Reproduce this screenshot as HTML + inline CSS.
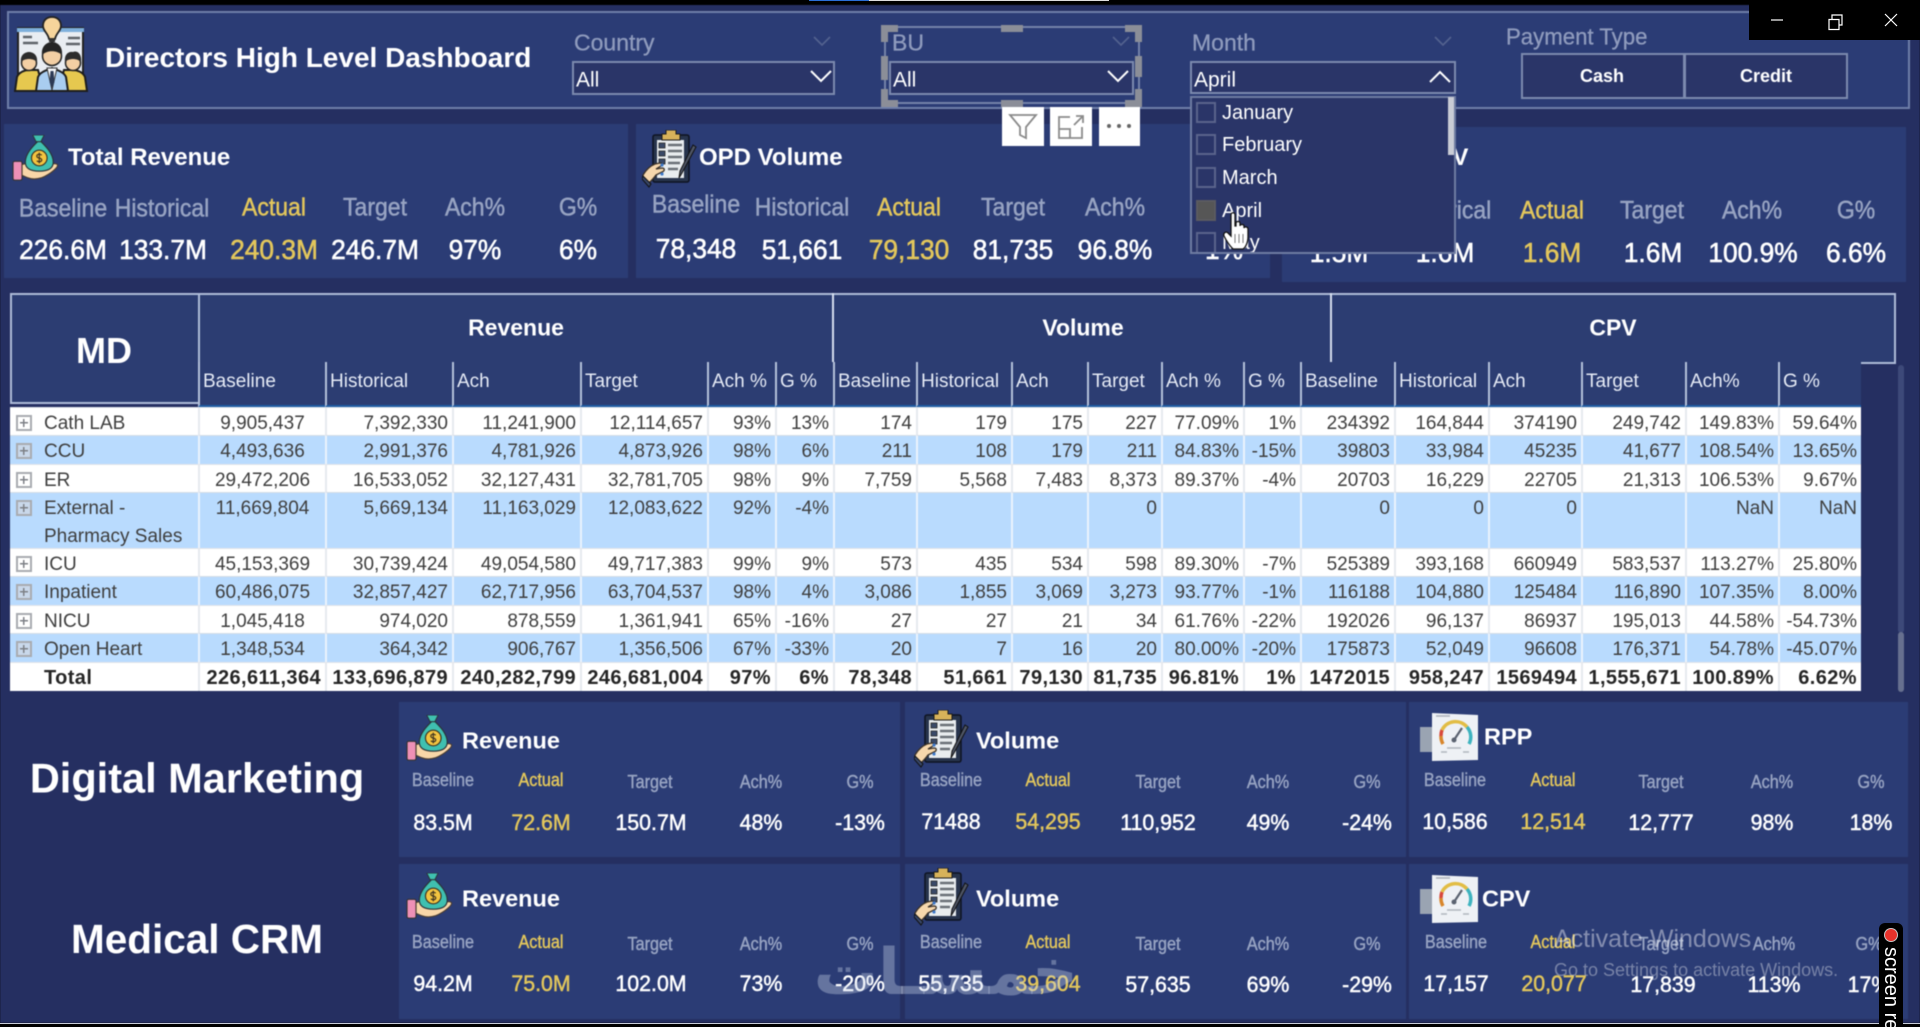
<!DOCTYPE html>
<html lang="en"><head><meta charset="utf-8"><title>Directors High Level Dashboard</title>
<style>
*{box-sizing:border-box}
html,body{margin:0;padding:0;background:#000;width:1920px;height:1027px;overflow:hidden}
body{font-family:"Liberation Sans",Arial,sans-serif;position:relative}
#p{position:absolute;left:0;top:5px;width:1920px;height:1018px;background:#252f61;overflow:hidden;filter:blur(.55px)}
#w{position:absolute;left:0;top:-5px;width:1920px;height:1027px}
.a{position:absolute}
.card{position:absolute;background:#2b3c75}
.t{position:absolute;white-space:nowrap;transform:translate(-50%,-50%);line-height:1}
.L{font-size:25px;color:#97a3c2;transform:translate(-50%,-50%) scaleX(.92);-webkit-text-stroke:.5px #97a3c2}
.V{font-size:28px;color:#fff;transform:translate(-50%,-50%) scaleX(.94);-webkit-text-stroke:.6px #fff}
.l{font-size:18px;color:#97a3c2;transform:translate(-50%,-50%) scaleX(.9);-webkit-text-stroke:.45px #97a3c2}
.v{font-size:22px;color:#fff;transform:translate(-50%,-50%) scaleX(.97);-webkit-text-stroke:.5px #fff}
.g{color:#e2c65c;-webkit-text-stroke-color:#e2c65c}
.h{position:absolute;white-space:nowrap;color:#fff;font-weight:700;line-height:1;transform:translateY(-50%)}
.sl{position:absolute;background:#2a3568;border:2px solid #7c8aae}
.c{position:absolute;white-space:nowrap;color:#fff;font-size:21px;line-height:1;transform:translateY(-50%)}
.d{font-size:20px}
.s{position:absolute;font-size:23px;color:#8f9bbd;white-space:nowrap;line-height:1;transform:translateY(-50%);-webkit-text-stroke:.3px #8f9bbd}
.hd{position:absolute;background:#8b8e98}
.tb{position:absolute;background:#fff}
.ck{position:absolute;left:1196px;width:20px;height:21px;border:2px solid #5a648c}
table{position:absolute;left:10px;top:362px;border-collapse:separate;border-spacing:0;table-layout:fixed;width:1851px;font-size:19px;color:#3e3e3e}
th{background:#2c3d72;color:#e6ebf6;font-weight:400;text-align:left;height:45px;padding:0 0 4px 3px;border-left:2px solid #b4c1da;border-bottom:2px solid #1f5da3;white-space:nowrap;overflow:hidden}
th:first-child{background:none;border:none}
td{background:#fff;height:28px;padding:4px 4px 0 0;line-height:23px;text-align:right;vertical-align:top;border-left:2px solid #e6e9ee;border-top:1px solid #e2e5ea;white-space:nowrap;overflow:hidden}
tr.b td{background:#b9dbfe;border-left-color:#eaf3fd;border-top-color:#d6dce6}
td.n{text-align:left;padding-left:34px;border-left:none;position:relative;overflow:visible}
td.m{text-align:center;padding-right:0}
tr.z td{font-weight:700;color:#252525;font-size:20px;letter-spacing:.4px;height:29px}
.pl{position:absolute;left:6px;top:7px;width:16px;height:16px;border:2px solid #a8abb0;background:linear-gradient(#7d8086,#7d8086) center/8px 1.5px no-repeat,linear-gradient(#7d8086,#7d8086) center/1.5px 8px no-repeat}
tr.b .pl{background-color:#c9d8ea}
</style></head><body>
<svg width="0" height="0" style="position:absolute">
<symbol id="bag" viewBox="0 0 58 56">
<rect x="1" y="32" width="11" height="23" rx="2" fill="#ee90b6" stroke="#333" stroke-width="1.4"/>
<path d="M12 36c8-3 13 0 17 3l13-2c6-2 11-3 13-1 2 3-9 12-19 16-10 3-16 1-24-3z" fill="#f8d6a8" stroke="#4a3d32" stroke-width="1.4"/>
<path d="M31 8c-4 4-15 14-15 25 0 8 7 11 17 11s17-3 17-11c0-11-11-21-15-25z" fill="#3fc0b0" stroke="#2b3338" stroke-width="1.4"/>
<path d="M25 0h14l-4 8h-6z" fill="#3fc0b0" stroke="#2b3338" stroke-width="1.2"/>
<circle cx="33" cy="28" r="9.5" fill="#f3c440" stroke="#3a3020" stroke-width="1.4"/>
<path d="M36 24.500c-2-1.500-6-1.500-6 1.300 0 3 6 1.500 6 4.500 0 2.700-4 2.700-6 1.200M33 21.500v13" fill="none" stroke="#3a3020" stroke-width="1.4"/>
</symbol>
<symbol id="clip" viewBox="0 0 56 58">
<rect x="11" y="5" width="36" height="47" rx="2" fill="#27344d" stroke="#0e1320" stroke-width="1.500"/>
<rect x="15" y="10" width="27" height="38" fill="#e9edef"/>
<path d="M24 0h10v4h4v6H20V4h4z" fill="#d7b25a" stroke="#1a1a1a"/>
<path d="M26 15h14M26 21h14M26 27h14M26 33h12M26 39h10" stroke="#6b7177" stroke-width="2.600"/>
<path d="M17 13h6v5h-6zM17 21h6v5h-6zM17 29h6v5h-6z" fill="#3a4a68" stroke="#222" stroke-width=".8"/>
<path d="M54 17 40 43l-3 5 1-7 13-26z" fill="#4f5666" stroke="#101010"/>
<path d="M1 45c3-5 7-9 12-11l5-1c2 0 3 2 1 3l-5 3 6-1c3 0 3 3 0 4l-6 3c-2 3-5 6-8 9l-5-5z" fill="#f6d7ac" stroke="#3a3128" stroke-width="1.300"/>
<path d="M1 46l8 8-2 3-7-8z" fill="#38476a" stroke="#111"/>
<circle cx="20" cy="35" r="1.600" fill="#3d78c8"/><circle cx="20" cy="44" r="1.600" fill="#3d78c8"/>
</symbol>
<symbol id="gau" viewBox="0 0 60 48">
<rect x="1" y="14" width="14" height="25" fill="#9aa4b2"/>
<path d="M13 0l46 2v45l-46 1z" fill="#eef1f5"/>
<path d="M17 3h14" stroke="#aab0b8" stroke-width="1.500"/>
<path d="M24 31a15 15 0 0 1-2-8" fill="none" stroke="#d8862c" stroke-width="3.500"/>
<path d="M22 23a15 15 0 0 1 1-6" fill="none" stroke="#d8483a" stroke-width="3.500"/>
<path d="M23 17a15 15 0 0 1 25-3" fill="none" stroke="#e2bd45" stroke-width="3.500"/>
<path d="M48 14a15 15 0 0 1 2 17" fill="none" stroke="#3eb3bf" stroke-width="3.500"/>
<path d="M35 27l8-12" stroke="#5a6270" stroke-width="2.200"/><circle cx="35" cy="27" r="2.500" fill="#5a6270"/>
<path d="M28 35h14M22 39h6M44 39h6" stroke="#b0b6be" stroke-width="1.600"/>
</symbol>
</svg>
<div id="p"><div id="w">
<!-- header -->
<div class="a" style="left:7px;top:11px;width:1903px;height:98px;background:#2b3c75;border:2px solid #6f7fa9"></div>
<svg class="a" style="left:14px;top:13px" width="76" height="80" viewBox="0 0 76 80">
<rect x="4" y="15" width="65" height="52" fill="#e9edf2" stroke="#222" stroke-width="2"/>
<rect x="3" y="15" width="67" height="4" fill="#7eb0dc"/>
<path d="M38 4c6 0 9 4 9 9 0 5-5 7-6 13h-6c-1-6-6-8-6-13 0-5 3-9 9-9z" fill="#f6d49b" stroke="#222" stroke-width="1.800"/>
<rect x="35" y="26" width="6" height="3" fill="#333"/>
<path d="M9 24h9M9 30h15M54 25h12M52 31h14" stroke="#5f646a" stroke-width="2.500"/>
<path d="M1 78l2-14c2-5 8-7 12-7h9l6 21z" fill="#e6c84f" stroke="#1d1d1d" stroke-width="2"/>
<path d="M73 78l-2-14c-2-5-8-7-12-7h-9l-6 21z" fill="#e6c84f" stroke="#1d1d1d" stroke-width="2"/>
<circle cx="15" cy="50" r="7.500" fill="#f3cfa4" stroke="#222" stroke-width="1.500"/><path d="M7 49c-1-7 4-10 8-10s9 3 8 10c-4-4-12-4-16 0z" fill="#2c2c2c"/>
<circle cx="59" cy="50" r="7.500" fill="#f3cfa4" stroke="#222" stroke-width="1.500"/><path d="M51 49c-1-7 3-11 8-10 5-2 9 3 8 10-4-4-12-4-16 0z" fill="#2c2c2c"/>
<path d="M22 78l2-14c2-5 9-7 14-9 5 2 12 4 14 9l2 14z" fill="#a9cdf0" stroke="#1d1d1d" stroke-width="2"/>
<path d="M33 55l5 22 5-22z" fill="#f5f7fa" stroke="#333"/><path d="M36.500 58h3l1 11-2.500 6-2.500-6z" fill="#2c3a55"/>
<circle cx="38" cy="43" r="9.500" fill="#f3cfa4" stroke="#222" stroke-width="1.500"/><path d="M28 42c-1-9 5-13 10-13s11 4 10 13c-5-5-15-5-20 0z" fill="#252525"/>
</svg>
<div class="h" style="left:105px;top:58px;font-size:28px">Directors High Level Dashboard</div>

<!-- KPI cards -->
<div class="card" style="left:4px;top:124px;width:624px;height:154px"></div>
<svg class="a" style="left:12px;top:135px" width="48" height="46"><use href="#bag"/></svg>
<div class="h" style="left:68px;top:158px;font-size:24px">Total Revenue</div>
<span class="t L" style="left:63px;top:209px">Baseline</span><span class="t L" style="left:162px;top:209px">Historical</span><span class="t L g" style="left:274px;top:208px">Actual</span><span class="t L" style="left:375px;top:208px">Target</span><span class="t L" style="left:475px;top:208px">Ach%</span><span class="t L" style="left:578px;top:208px">G%</span>
<span class="t V" style="left:63px;top:250px">226.6M</span><span class="t V" style="left:163px;top:250px">133.7M</span><span class="t V g" style="left:274px;top:250px">240.3M</span><span class="t V" style="left:375px;top:250px">246.7M</span><span class="t V" style="left:475px;top:250px">97%</span><span class="t V" style="left:578px;top:250px">6%</span>

<div class="card" style="left:636px;top:124px;width:634px;height:154px"></div>
<svg class="a" style="left:642px;top:130px" width="56" height="58"><use href="#clip"/></svg>
<div class="h" style="left:699px;top:158px;font-size:24px">OPD Volume</div>
<span class="t L" style="left:696px;top:205px">Baseline</span><span class="t L" style="left:802px;top:208px">Historical</span><span class="t L g" style="left:909px;top:208px">Actual</span><span class="t L" style="left:1013px;top:208px">Target</span><span class="t L" style="left:1115px;top:208px">Ach%</span><span class="t L" style="left:1224px;top:208px">G%</span>
<span class="t V" style="left:696px;top:249px">78,348</span><span class="t V" style="left:802px;top:250px">51,661</span><span class="t V g" style="left:909px;top:250px">79,130</span><span class="t V" style="left:1013px;top:250px">81,735</span><span class="t V" style="left:1115px;top:250px">96.8%</span><span class="t V" style="left:1224px;top:250px">1%</span>

<div class="card" style="left:1282px;top:127px;width:624px;height:155px"></div>
<div class="h" style="left:1419px;top:158px;font-size:24px">CPV</div>
<span class="t L" style="left:1339px;top:211px">Baseline</span><span class="t L" style="left:1444px;top:211px">Historical</span><span class="t L g" style="left:1552px;top:211px">Actual</span><span class="t L" style="left:1652px;top:211px">Target</span><span class="t L" style="left:1752px;top:211px">Ach%</span><span class="t L" style="left:1856px;top:211px">G%</span>
<span class="t V" style="left:1339px;top:253px">1.5M</span><span class="t V" style="left:1445px;top:253px">1.6M</span><span class="t V g" style="left:1552px;top:253px">1.6M</span><span class="t V" style="left:1653px;top:253px">1.6M</span><span class="t V" style="left:1753px;top:253px">100.9%</span><span class="t V" style="left:1856px;top:253px">6.6%</span>

<!-- slicers -->
<div class="s" style="left:574px;top:43px">Country</div>
<svg class="a" style="left:813px;top:36px" width="18" height="10"><path d="M1 1l8 8 8-8" fill="none" stroke="#54628f" stroke-width="1.600"/></svg>
<div class="sl" style="left:572px;top:61px;width:263px;height:34px"></div>
<div class="c" style="left:576px;top:80px">All</div>
<svg class="a" style="left:810px;top:70px" width="22" height="13"><path d="M1 1l10 10L21 1" fill="none" stroke="#fff" stroke-width="2"/></svg>

<div class="a" style="left:884px;top:26px;width:256px;height:78px;border:2px solid #7482a8"></div>
<div class="s" style="left:892px;top:43px">BU</div>
<svg class="a" style="left:1112px;top:36px" width="18" height="10"><path d="M1 1l8 8 8-8" fill="none" stroke="#54628f" stroke-width="1.600"/></svg>
<div class="sl" style="left:889px;top:61px;width:245px;height:34px"></div>
<div class="c" style="left:893px;top:80px">All</div>
<svg class="a" style="left:1107px;top:70px" width="22" height="13"><path d="M1 1l10 10L21 1" fill="none" stroke="#fff" stroke-width="2"/></svg>
<i class="hd" style="left:881px;top:25px;width:17px;height:7px"></i><i class="hd" style="left:881px;top:25px;width:7px;height:17px"></i>
<i class="hd" style="left:1125px;top:25px;width:17px;height:7px"></i><i class="hd" style="left:1135px;top:25px;width:7px;height:17px"></i>
<i class="hd" style="left:881px;top:100px;width:17px;height:7px"></i><i class="hd" style="left:881px;top:89px;width:7px;height:18px"></i>
<i class="hd" style="left:1125px;top:100px;width:17px;height:7px"></i><i class="hd" style="left:1135px;top:89px;width:7px;height:18px"></i>
<i class="hd" style="left:1001px;top:25px;width:22px;height:7px"></i><i class="hd" style="left:1001px;top:100px;width:22px;height:7px"></i>
<i class="hd" style="left:881px;top:56px;width:7px;height:24px"></i><i class="hd" style="left:1135px;top:56px;width:7px;height:21px"></i>

<div class="tb" style="left:1002px;top:107px;width:42px;height:39px"></div>
<svg class="a" style="left:1008px;top:113px" width="30" height="28"><path d="M2 2h26L18 14v11l-6-3v-8z" fill="none" stroke="#8a8a8a" stroke-width="1.800"/></svg>
<div class="tb" style="left:1050px;top:107px;width:42px;height:39px"></div>
<svg class="a" style="left:1057px;top:114px" width="28" height="26"><path d="M13 3H2v21h23V13M2 15h11v9M17 11l8-8M19 2h7v7" fill="none" stroke="#8a8a8a" stroke-width="1.800"/></svg>
<div class="tb" style="left:1099px;top:107px;width:41px;height:39px"></div>
<svg class="a" style="left:1104px;top:122px" width="30" height="8"><circle cx="5" cy="4" r="2" fill="#666"/><circle cx="15" cy="4" r="2" fill="#666"/><circle cx="25" cy="4" r="2" fill="#666"/></svg>

<div class="s" style="left:1192px;top:43px">Month</div>
<svg class="a" style="left:1434px;top:36px" width="18" height="10"><path d="M1 1l8 8 8-8" fill="none" stroke="#54628f" stroke-width="1.600"/></svg>
<div class="sl" style="left:1190px;top:61px;width:266px;height:33px"></div>
<div class="c" style="left:1194px;top:80px">April</div>
<svg class="a" style="left:1429px;top:70px" width="22" height="13"><path d="M1 12L11 2l10 10" fill="none" stroke="#fff" stroke-width="2"/></svg>

<div class="a" style="left:1190px;top:96px;width:266px;height:158px;background:#2a3568;border:2px solid #6f7ca2;overflow:hidden"></div>
<div class="a" style="left:1448px;top:97px;width:6px;height:58px;background:#c9ccd5"></div>
<i class="ck" style="top:102px"></i><i class="ck" style="top:134px"></i><i class="ck" style="top:167px"></i><i class="ck" style="top:200px;background:#565656;border-color:#5a5a60"></i><i class="ck" style="top:232px;height:20px;border-bottom:none"></i>
<div class="c d" style="left:1222px;top:113px">January</div><div class="c d" style="left:1222px;top:145px">February</div><div class="c d" style="left:1222px;top:178px">March</div><div class="c d" style="left:1222px;top:211px">April</div>
<div class="a" style="left:1222px;top:232px;width:60px;height:20px;overflow:hidden"><span style="position:absolute;left:0;top:1px;color:#fff;font-size:20px;line-height:1.000">May</span></div>
<svg class="a" style="left:1222px;top:212px" width="32" height="38" viewBox="0 0 32 38"><path d="M9 3c0-3 4-3 4 0v11l1 0V11c0-2 4-2 4 0v3c0-2 4-2 4 0v2c1-2 4-1 4 1v8c0 6-3 11-5 12H11c-3-3-7-9-9-13-1-3 2-5 4-3l3 3z" fill="#fff" stroke="#111" stroke-width="1.300"/><path d="M13 22v9M17 22v9M21 22v9" stroke="#777"/></svg>

<div class="s" style="left:1506px;top:37px;transform:translateY(-50%) scaleX(.965);transform-origin:left">Payment Type</div>
<div class="sl" style="left:1521px;top:53px;width:164px;height:46px"></div>
<div class="sl" style="left:1684px;top:53px;width:164px;height:46px"></div>
<div class="h" style="left:1602px;top:76px;font-size:18px;transform:translate(-50%,-50%)">Cash</div>
<div class="h" style="left:1766px;top:76px;font-size:18px;transform:translate(-50%,-50%)">Credit</div>

<!-- table -->
<div class="a" style="left:10px;top:293px;width:190px;height:111px;background:#2c3d72;border:2px solid #aebcd8"></div>
<div class="h" style="left:104px;top:351px;font-size:36px;transform:translate(-50%,-50%)">MD</div>
<div class="a" style="left:198px;top:293px;width:1698px;height:71px;background:#2c3d72;border:2px solid #aebcd8"></div>
<i class="a" style="left:832px;top:293px;width:2px;height:70px;background:#d5deee"></i>
<i class="a" style="left:1330px;top:293px;width:2px;height:70px;background:#d5deee"></i>
<div class="h" style="left:516px;top:328px;font-size:23px;transform:translate(-50%,-50%)">Revenue</div>
<div class="h" style="left:1083px;top:328px;font-size:23px;transform:translate(-50%,-50%)">Volume</div>
<div class="h" style="left:1613px;top:328px;font-size:23px;transform:translate(-50%,-50%)">CPV</div>
<i class="a" style="left:1898px;top:365px;width:6px;height:268px;background:#3d4979;border-radius:3px"></i>
<i class="a" style="left:1898px;top:632px;width:6px;height:60px;background:#67708f;border-radius:3px"></i>

<table>
<colgroup><col style="width:188px"><col style="width:127px"><col style="width:127px"><col style="width:128px"><col style="width:127px"><col style="width:68px"><col style="width:58px"><col style="width:83px"><col style="width:95px"><col style="width:76px"><col style="width:74px"><col style="width:82px"><col style="width:57px"><col style="width:94px"><col style="width:94px"><col style="width:93px"><col style="width:104px"><col style="width:93px"><col style="width:83px"></colgroup>
<tr><th></th><th>Baseline</th><th>Historical</th><th>Ach</th><th>Target</th><th>Ach %</th><th>G %</th><th>Baseline</th><th>Historical</th><th>Ach</th><th>Target</th><th>Ach %</th><th>G %</th><th>Baseline</th><th>Historical</th><th>Ach</th><th>Target</th><th>Ach%</th><th>G %</th></tr>
<tr><td class="n"><i class="pl"></i>Cath LAB</td><td class="m">9,905,437</td><td>7,392,330</td><td>11,241,900</td><td>12,114,657</td><td>93%</td><td>13%</td><td>174</td><td>179</td><td>175</td><td>227</td><td>77.09%</td><td>1%</td><td>234392</td><td>164,844</td><td>374190</td><td>249,742</td><td>149.83%</td><td>59.64%</td></tr>
<tr class="b" style="height:29px"><td class="n"><i class="pl"></i>CCU</td><td class="m">4,493,636</td><td>2,991,376</td><td>4,781,926</td><td>4,873,926</td><td>98%</td><td>6%</td><td>211</td><td>108</td><td>179</td><td>211</td><td>84.83%</td><td>-15%</td><td>39803</td><td>33,984</td><td>45235</td><td>41,677</td><td>108.54%</td><td>13.65%</td></tr>
<tr><td class="n"><i class="pl"></i>ER</td><td class="m">29,472,206</td><td>16,533,052</td><td>32,127,431</td><td>32,781,705</td><td>98%</td><td>9%</td><td>7,759</td><td>5,568</td><td>7,483</td><td>8,373</td><td>89.37%</td><td>-4%</td><td>20703</td><td>16,229</td><td>22705</td><td>21,313</td><td>106.53%</td><td>9.67%</td></tr>
<tr class="b" style="height:56px"><td class="n" style="height:56px"><i class="pl"></i><div style="line-height:28px;margin-top:-2px;margin-bottom:-3px">External -<br>Pharmacy Sales</div></td><td class="m">11,669,804</td><td>5,669,134</td><td>11,163,029</td><td>12,083,622</td><td>92%</td><td>-4%</td><td></td><td></td><td></td><td>0</td><td></td><td></td><td>0</td><td>0</td><td>0</td><td></td><td>NaN</td><td>NaN</td></tr>
<tr><td class="n"><i class="pl"></i>ICU</td><td class="m">45,153,369</td><td>30,739,424</td><td>49,054,580</td><td>49,717,383</td><td>99%</td><td>9%</td><td>573</td><td>435</td><td>534</td><td>598</td><td>89.30%</td><td>-7%</td><td>525389</td><td>393,168</td><td>660949</td><td>583,537</td><td>113.27%</td><td>25.80%</td></tr>
<tr class="b" style="height:29px"><td class="n"><i class="pl"></i>Inpatient</td><td class="m">60,486,075</td><td>32,857,427</td><td>62,717,956</td><td>63,704,537</td><td>98%</td><td>4%</td><td>3,086</td><td>1,855</td><td>3,069</td><td>3,273</td><td>93.77%</td><td>-1%</td><td>116188</td><td>104,880</td><td>125484</td><td>116,890</td><td>107.35%</td><td>8.00%</td></tr>
<tr><td class="n"><i class="pl"></i>NICU</td><td class="m">1,045,418</td><td>974,020</td><td>878,559</td><td>1,361,941</td><td>65%</td><td>-16%</td><td>27</td><td>27</td><td>21</td><td>34</td><td>61.76%</td><td>-22%</td><td>192026</td><td>96,137</td><td>86937</td><td>195,013</td><td>44.58%</td><td>-54.73%</td></tr>
<tr class="b" style="height:29px"><td class="n"><i class="pl"></i>Open Heart</td><td class="m">1,348,534</td><td>364,342</td><td>906,767</td><td>1,356,506</td><td>67%</td><td>-33%</td><td>20</td><td>7</td><td>16</td><td>20</td><td>80.00%</td><td>-20%</td><td>175873</td><td>52,049</td><td>96608</td><td>176,371</td><td>54.78%</td><td>-45.07%</td></tr>
<tr class="z" style="height:29px"><td class="n">Total</td><td>226,611,364</td><td>133,696,879</td><td>240,282,799</td><td>246,681,004</td><td>97%</td><td>6%</td><td>78,348</td><td>51,661</td><td>79,130</td><td>81,735</td><td>96.81%</td><td>1%</td><td>1472015</td><td>958,247</td><td>1569494</td><td>1,555,671</td><td>100.89%</td><td>6.62%</td></tr>
</table>

<!-- bottom -->
<div class="h" style="left:197px;top:778px;font-size:41.500px;transform:translate(-50%,-50%)">Digital Marketing</div>
<div class="h" style="left:197px;top:939px;font-size:40.500px;transform:translate(-50%,-50%)">Medical CRM</div>

<div class="card" style="left:399px;top:702px;width:501px;height:155px"></div>
<div class="card" style="left:905px;top:702px;width:501px;height:155px"></div>
<div class="card" style="left:1409px;top:702px;width:499px;height:155px"></div>
<div class="card" style="left:399px;top:864px;width:501px;height:155px"></div>
<div class="card" style="left:905px;top:864px;width:501px;height:155px"></div>
<div class="card" style="left:1409px;top:864px;width:499px;height:155px"></div>

<svg class="a" style="left:406px;top:715px" width="48" height="46"><use href="#bag"/></svg>
<div class="h" style="left:462px;top:741px;font-size:23.500px">Revenue</div>
<span class="t l" style="left:443px;top:780px">Baseline</span><span class="t l g" style="left:541px;top:780px">Actual</span><span class="t l" style="left:650px;top:782px">Target</span><span class="t l" style="left:761px;top:782px">Ach%</span><span class="t l" style="left:860px;top:782px">G%</span>
<span class="t v" style="left:443px;top:823px">83.5M</span><span class="t v g" style="left:541px;top:823px">72.6M</span><span class="t v" style="left:651px;top:823px">150.7M</span><span class="t v" style="left:761px;top:823px">48%</span><span class="t v" style="left:860px;top:823px">-13%</span>

<svg class="a" style="left:914px;top:710px" width="56" height="58"><use href="#clip"/></svg>
<div class="h" style="left:976px;top:741px;font-size:23.500px">Volume</div>
<span class="t l" style="left:951px;top:780px">Baseline</span><span class="t l g" style="left:1048px;top:780px">Actual</span><span class="t l" style="left:1158px;top:782px">Target</span><span class="t l" style="left:1268px;top:782px">Ach%</span><span class="t l" style="left:1367px;top:782px">G%</span>
<span class="t v" style="left:951px;top:822px">71488</span><span class="t v g" style="left:1048px;top:822px">54,295</span><span class="t v" style="left:1158px;top:823px">110,952</span><span class="t v" style="left:1268px;top:823px">49%</span><span class="t v" style="left:1367px;top:823px">-24%</span>

<svg class="a" style="left:1419px;top:713px" width="60" height="48"><use href="#gau"/></svg>
<div class="h" style="left:1484px;top:737px;font-size:23.500px">RPP</div>
<span class="t l" style="left:1455px;top:780px">Baseline</span><span class="t l g" style="left:1553px;top:780px">Actual</span><span class="t l" style="left:1661px;top:782px">Target</span><span class="t l" style="left:1772px;top:782px">Ach%</span><span class="t l" style="left:1871px;top:782px">G%</span>
<span class="t v" style="left:1455px;top:822px">10,586</span><span class="t v g" style="left:1553px;top:822px">12,514</span><span class="t v" style="left:1661px;top:823px">12,777</span><span class="t v" style="left:1772px;top:823px">98%</span><span class="t v" style="left:1871px;top:823px">18%</span>

<svg class="a" style="left:406px;top:873px" width="48" height="46"><use href="#bag"/></svg>
<div class="h" style="left:462px;top:899px;font-size:23.500px">Revenue</div>
<span class="t l" style="left:443px;top:942px">Baseline</span><span class="t l g" style="left:541px;top:942px">Actual</span><span class="t l" style="left:650px;top:944px">Target</span><span class="t l" style="left:761px;top:944px">Ach%</span><span class="t l" style="left:860px;top:944px">G%</span>
<span class="t v" style="left:443px;top:984px">94.2M</span><span class="t v g" style="left:541px;top:984px">75.0M</span><span class="t v" style="left:651px;top:984px">102.0M</span><span class="t v" style="left:761px;top:984px">73%</span><span class="t v" style="left:860px;top:984px">-20%</span>

<svg class="a" style="left:914px;top:868px" width="56" height="58"><use href="#clip"/></svg>
<div class="h" style="left:976px;top:899px;font-size:23.500px">Volume</div>
<span class="t l" style="left:951px;top:942px">Baseline</span><span class="t l g" style="left:1048px;top:942px">Actual</span><span class="t l" style="left:1158px;top:944px">Target</span><span class="t l" style="left:1268px;top:944px">Ach%</span><span class="t l" style="left:1367px;top:944px">G%</span>
<span class="t v" style="left:951px;top:984px">55,735</span><span class="t v g" style="left:1048px;top:984px">39,604</span><span class="t v" style="left:1158px;top:985px">57,635</span><span class="t v" style="left:1268px;top:985px">69%</span><span class="t v" style="left:1367px;top:985px">-29%</span>

<svg class="a" style="left:1419px;top:875px" width="60" height="48"><use href="#gau"/></svg>
<div class="h" style="left:1482px;top:899px;font-size:23.500px">CPV</div>
<span class="t l" style="left:1456px;top:942px">Baseline</span><span class="t l g" style="left:1553px;top:942px">Actual</span><span class="t l" style="left:1661px;top:944px">Target</span><span class="t l" style="left:1774px;top:944px">Ach%</span><span class="t l" style="left:1869px;top:944px">G%</span>
<span class="t v" style="left:1456px;top:984px">17,157</span><span class="t v g" style="left:1554px;top:984px">20,077</span><span class="t v" style="left:1663px;top:985px">17,839</span><span class="t v" style="left:1774px;top:985px">113%</span><span class="t v" style="left:1869px;top:985px">17%</span>

<div class="a" dir="rtl" lang="ar" style="left:838px;top:938px;width:240px;text-align:center;font:700 64px 'DejaVu Sans',sans-serif;line-height:1.100;color:rgba(205,215,235,.36);white-space:nowrap">خمسـات</div>
<div class="a" style="left:1554px;top:927px;font-size:25px;color:rgba(255,255,255,.42);white-space:nowrap;line-height:1.000">Activate Windows</div>
<div class="a" style="left:1554px;top:961px;font-size:18px;color:rgba(255,255,255,.36);white-space:nowrap;line-height:1.000">Go to Settings to activate Windows.</div>
</div></div>

<!-- sharp overlays -->
<div class="a" style="left:0;top:1023px;width:1920px;height:1px;background:#c7ccd8"></div>
<div class="a" style="left:869px;top:0;width:240px;height:1px;background:#ddd"></div>
<div class="a" style="left:809px;top:0;width:60px;height:1px;background:#2a6fd6"></div>
<div class="a" style="left:1749px;top:0;width:171px;height:40px;background:#000"></div>
<svg class="a" style="left:1749px;top:0" width="171" height="40"><path d="M22 20h12" stroke="#fff" stroke-width="1.200" fill="none"/><path d="M80 19.500h10v10H80zM83 19.500V15h10v10h-3" stroke="#fff" stroke-width="1.200" fill="none"/><path d="M136 14l12 12M148 14l-12 12" stroke="#fff" stroke-width="1.200" fill="none"/></svg>
<div class="a" style="left:1879px;top:923px;width:24px;height:104px;background:#000;border-radius:6px 6px 0 0;overflow:hidden">
<i class="a" style="left:6px;top:6px;width:12px;height:12px;border-radius:50%;background:#e8322b;box-shadow:0 0 0 1px #c9c9c9"></i>
<span class="a" style="left:2px;top:24px;writing-mode:vertical-rl;color:#fff;font-size:20px;line-height:20px;white-space:nowrap">screen rec</span>
</div>
</body></html>
